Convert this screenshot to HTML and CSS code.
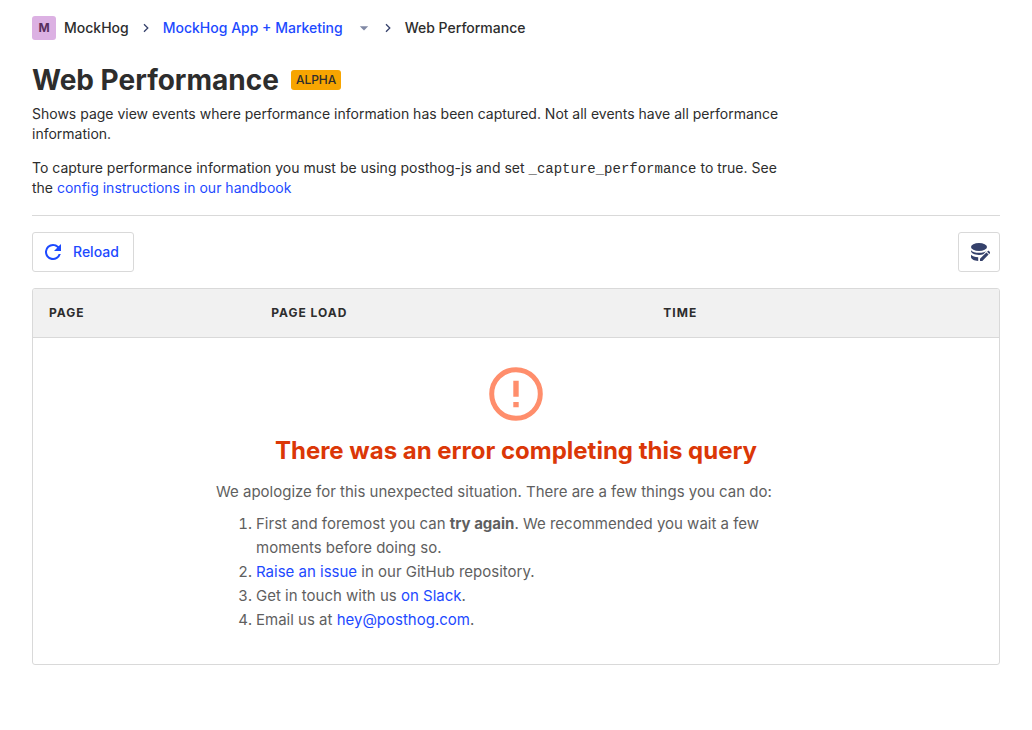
FILE: index.html
```html
<!DOCTYPE html>
<html lang="en">
<head>
<meta charset="utf-8">
<meta name="viewport" content="width=device-width, initial-scale=1">
<title>Web Performance</title>
<link rel="stylesheet" href="styles.css">
</head>
<body>
<nav class="breadcrumbs" aria-label="Breadcrumb">
  <span class="avatar">M</span>
  <span class="crumb">MockHog</span>
  <svg class="chevron" viewBox="0 0 14 14" aria-hidden="true"><path d="M5 3.2 8.8 7 5 10.8"/></svg>
  <button class="project" type="button">MockHog App + Marketing
    <svg class="caret" viewBox="0 0 14 14" aria-hidden="true"><path d="M2.8 5.2h8.4L7 9.4z"/></svg>
  </button>
  <svg class="chevron" viewBox="0 0 14 14" aria-hidden="true"><path d="M5 3.2 8.8 7 5 10.8"/></svg>
  <span class="crumb">Web Performance</span>
</nav>
<main>
  <div class="title-row">
    <h1 class="title">Web Performance</h1>
    <span class="tag">ALPHA</span>
  </div>
  <div class="caption">
    <p class="caption-text">Shows page view events where performance information has been captured. Not all events have all performance information.</p>
    <p class="caption-text">To capture performance information you must be using posthog-js and set <code class="code">_capture_performance</code> to true. See the <a class="link" href="#">config instructions in our handbook</a></p>
  </div>
  <hr class="divider">
  <div class="toolbar">
    <button class="button reload" type="button">
      <svg class="reload-icon" viewBox="0 0 24 24" aria-hidden="true"><path d="M17.65 6.35A7.96 7.96 0 0 0 12 4a8 8 0 1 0 7.73 10h-2.08A6 6 0 1 1 12 6c1.66 0 3.14.69 4.22 1.78L13 11h7V4z"/></svg>
      Reload
    </button>
    <button class="button columns" type="button" aria-label="Customize columns">
      <svg class="database-icon" viewBox="0 0 20 20" aria-hidden="true">
        <ellipse cx="9" cy="5" rx="8" ry="4"/>
        <path d="M1 8.200c1.500 1.800 4.600 2.600 8 2.600s6.500-.8 8-2.600l-3.700 4c-1.200.5-2.700.8-4.300.8-4.400 0-8-1.800-8-3.900z"/>
        <path d="M1 12.800c1.400 1.600 4 2.400 7.200 2.500V19C4.100 18.800 1 17.200 1 15.100z"/>
        <path d="M10 16.700 16.400 10.400l2.200 2.200L12.300 19H10zM17.100 9.700l.8-.8c.3-.3.700-.3 1 0l1.200 1.200c.3.300.3.700 0 1l-.8.8z"/>
      </svg>
    </button>
  </div>
  <div class="table-card">
    <table class="table">
      <colgroup><col class="col-page"><col class="col-load"><col></colgroup>
      <thead><tr><th class="head" scope="col">PAGE</th><th class="head" scope="col">PAGE LOAD</th><th class="head" scope="col">TIME</th></tr></thead>
      <tbody><tr><td class="empty-cell" colspan="3">
        <div class="error">
          <svg class="error-icon" viewBox="0 0 64 64" aria-hidden="true"><circle cx="32" cy="32" r="24.300"/><path d="M29.300 18.700h5.400v16h-5.400zM29.300 40h5.400v5.300h-5.400z"/></svg>
          <h2 class="error-title">There was an error completing this query</h2>
          <div class="error-body">
            <p class="error-intro">We apologize for this unexpected situation. There are a few things you can do:</p>
            <ol class="steps">
              <li>First and foremost you can <b>try again</b>. We recommended you wait a few moments before doing so.</li>
              <li><a class="link" href="#">Raise an issue</a> in our GitHub repository.</li>
              <li>Get in touch with us <a class="link" href="#">on Slack</a>.</li>
              <li>Email us at <a class="link" href="#">hey@posthog.com</a>.</li>
            </ol>
          </div>
        </div>
      </td></tr></tbody>
    </table>
  </div>
</main>
</body>
</html>
```
FILE: styles.css
```css
* { box-sizing: border-box; }
body {
  margin: 0;
  padding: 16px 32px;
  background: #fff;
  color: #2d2d2d;
  font: 14px/20px Inter, "Liberation Sans", sans-serif;
}
.link { color: #1d4aff; text-decoration: none; }
.breadcrumbs { display: flex; align-items: center; height: 24px; font-weight: 500; }
.avatar {
  width: 24px;
  height: 24px;
  margin-right: 8px;
  border-radius: 3px;
  background: #dcb1e3;
  color: #572e5e;
  font-size: 12px;
  font-weight: 700;
  line-height: 24px;
  text-align: center;
}
.chevron { width: 14px; height: 14px; margin: 0 10px; fill: none; stroke: #35416b; stroke-width: 1.3; }
.project {
  display: flex;
  align-items: center;
  gap: 14px;
  padding: 0;
  border: 0;
  background: none;
  color: #1d4aff;
  font: inherit;
  cursor: pointer;
}
.caret { width: 14px; height: 14px; fill: #8089a5; }
.title-row { display: flex; align-items: center; gap: 12px; margin-top: 20px; }
.title { margin: 0; font-size: 28px; line-height: 40px; font-weight: 700; }
.tag { padding: 0 5px; border-radius: 3px; background: #f7a501; font-size: 12px; font-weight: 500; line-height: 20px; }
.caption { max-width: 768px; margin-top: 4px; }
.caption-text { margin: 0 0 14px; }
.code { font: 14px "Liberation Mono", monospace; }
.divider { height: 1px; margin: 17px 0 16px; border: 0; background: #d9d9d9; }
.toolbar { display: flex; justify-content: space-between; margin-bottom: 16px; }
.button {
  display: flex;
  align-items: center;
  height: 40px;
  border: 1px solid #d9d9d9;
  border-radius: 3px;
  background: #fff;
  cursor: pointer;
}
.reload { gap: 8px; padding: 0 14px 0 8px; color: #1d4aff; font: inherit; font-weight: 500; }
.reload-icon { width: 24px; height: 24px; fill: currentColor; }
.columns { padding: 0 9px 0 11px; }
.database-icon { width: 20px; height: 20px; fill: #35416b; }
.table-card { overflow: hidden; border: 1px solid #d9d9d9; border-radius: 3px; }
.table { width: 100%; border-collapse: collapse; table-layout: fixed; }
.col-page { width: 23%; }
.col-load { width: 40.6%; }
.head {
  height: 48px;
  padding: 0 16px;
  border-bottom: 1px solid #d9d9d9;
  background: #f1f1f1;
  font-size: 12px;
  font-weight: 700;
  letter-spacing: 1px;
  text-align: left;
}
.empty-cell { padding: 24px 16px 32px; }
.error { color: #5f5f5f; font-size: 15px; line-height: 24px; }
.error-icon { display: block; width: 64px; height: 64px; margin: 0 auto; fill: #ff8e6c; }
.error-icon circle { fill: none; stroke: #ff8e6c; stroke-width: 5; }
.error-title { margin: 8px 0 12px; color: #db3707; font-size: 24px; line-height: 34px; text-align: center; }
.error-body { max-width: 600px; margin: 0 auto; }
.error-intro { margin: 0 0 8px; }
.steps { margin: 0; padding-left: 40px; }
```
